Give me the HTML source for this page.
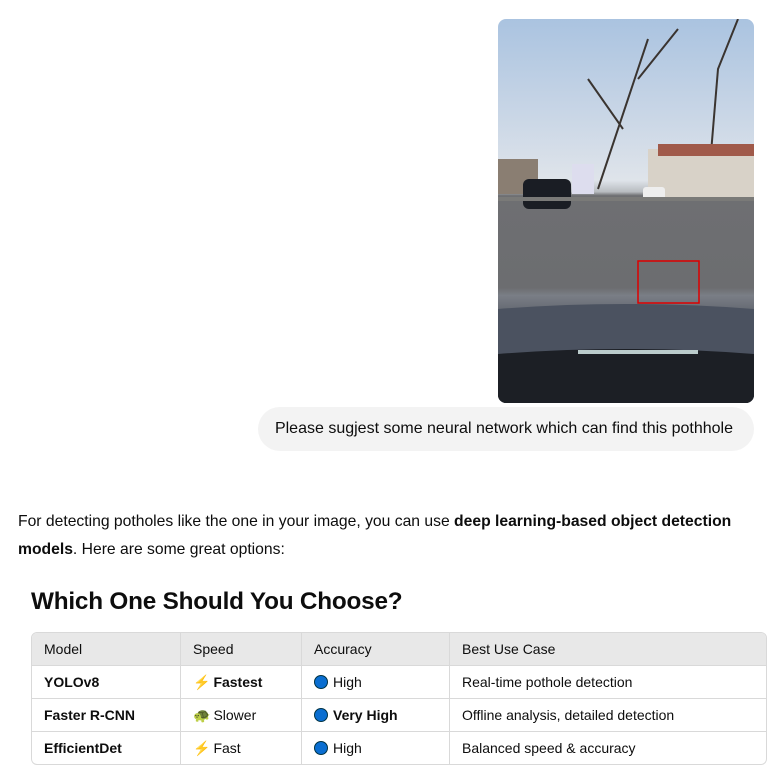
<!DOCTYPE html>
<html><head><style>
body{margin:0;width:784px;height:783px;background:#fff;font-family:"Liberation Sans",sans-serif;color:#0d0d0d;position:relative;overflow:hidden}
.img{position:absolute;left:498px;top:19px;width:256px;height:384px;border-radius:8px;overflow:hidden;background:linear-gradient(#aac3e0 0%,#c9d6e6 25%,#dfe4ea 42%,#b8bcc0 45%,#6e6f72 46%,#6c6d70 70%,#7a7e86 72%,#454a54 82%,#22262c 92%,#0a0b0d 100%)}
.bubble{position:absolute;left:258px;top:407px;width:496px;height:44px;background:#f3f3f3;border-radius:22px;font-size:16px;line-height:44px;text-align:right;box-sizing:border-box;padding-right:21px}
p{position:absolute;left:18px;top:508px;margin:0;width:760px;font-size:15.7px;line-height:28px}
h2{position:absolute;left:31px;top:588px;margin:0;font-size:24.3px;font-weight:900;letter-spacing:-0.2px}
table{position:absolute;left:31px;top:632px;width:736px;border-collapse:separate;border-spacing:0;border:1px solid #d9d9d9;border-radius:6px;font-size:14px;overflow:hidden}
td,th{height:32px;padding:0 12px;text-align:left;font-weight:normal;border-right:1px solid #d9d9d9;border-bottom:1px solid #d9d9d9}
th{background:#e8e8e8}
tr td:last-child,tr th:last-child{border-right:none}
tr:last-child td{border-bottom:none}
.dot{display:inline-block;width:14px;height:14px;border-radius:50%;background:#0a6ed1;border:1px solid #034;vertical-align:-2px;margin-right:5px;box-sizing:border-box}
.bolt{color:#f0b400;margin-right:3px}
</style></head><body>
<div class="img">
<svg width="256" height="384" style="position:absolute;left:0;top:0">
<path d="M100 170 L130 80 L150 20 M140 60 L180 10 M125 110 L90 60 M210 170 L220 50 L240 0" stroke="#3a3430" stroke-width="2" fill="none"/>
<rect x="150" y="130" width="106" height="50" fill="#d8d2c8"/><rect x="160" y="125" width="96" height="12" fill="#a05a4a"/>
<rect x="0" y="140" width="40" height="35" fill="#8a7e72"/>
<rect x="74" y="145" width="22" height="30" fill="#dde"/>
<rect x="25" y="160" width="48" height="30" rx="6" fill="#1a1d24"/>
<rect x="145" y="168" width="22" height="13" rx="3" fill="#eee"/>
<path d="M0 178 L256 178 L256 182 L0 182Z" fill="#7a7a78"/>
<rect x="140" y="242" width="61" height="42" fill="none" stroke="#d00" stroke-width="1.5"/>
<path d="M0 290 Q128 280 256 290 L256 384 L0 384Z" fill="#4b5260"/>
<path d="M0 335 Q128 325 256 335 L256 384 L0 384Z" fill="#1c1f25"/>
<rect x="80" y="331" width="120" height="4" fill="#bcc" />
</svg></div>
<div class="bubble">Please sugjest some neural network which can find this pothhole</div>
<p>For detecting potholes like the one in your image, you can use <b>deep learning-based object detection models</b>. Here are some great options:</p>
<h2>Which One Should You Choose?</h2>
<table>
<tr><th style="width:124px">Model</th><th style="width:96px">Speed</th><th style="width:123px">Accuracy</th><th>Best Use Case</th></tr>
<tr><td><b style="font-weight:600">YOLOv8</b></td><td><span class="bolt">⚡</span><b>Fastest</b></td><td><span class="dot"></span>High</td><td>Real-time pothole detection</td></tr>
<tr><td><b style="font-weight:600">Faster R-CNN</b></td><td><span style="color:#4a4;margin-right:3px">🐢</span>Slower</td><td><span class="dot"></span><b>Very High</b></td><td>Offline analysis, detailed detection</td></tr>
<tr><td><b style="font-weight:600">EfficientDet</b></td><td><span class="bolt">⚡</span>Fast</td><td><span class="dot"></span>High</td><td>Balanced speed &amp; accuracy</td></tr>
</table>
</body></html>
